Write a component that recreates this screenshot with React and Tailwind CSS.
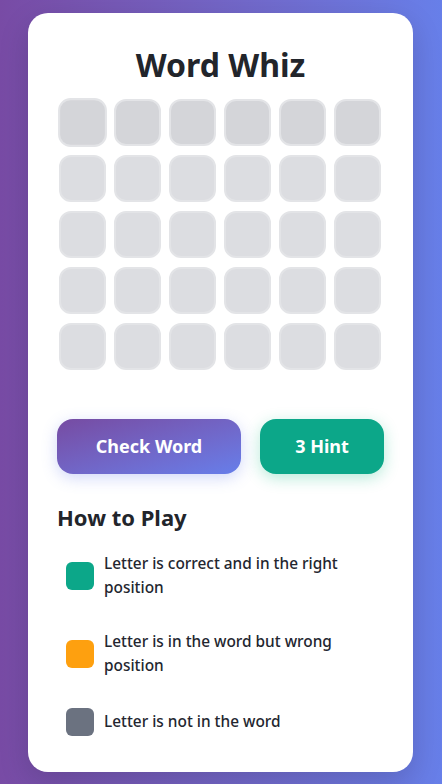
import React from "react";

const FONT = { fontFamily: '"Noto Sans", "Open Sans", sans-serif' };

function Tile({ first, active }) {
  return (
    <div
      className={
        "w-[47px] h-[47px] rounded-[12px] border-2 border-[#e3e4e7] " +
        (first ? "bg-[#d4d5d9] " : "bg-[#dcdde1] ") +
        (active ? "scale-[1.04]" : "")
      }
    />
  );
}

function Legend({ color, text }) {
  return (
    <div className="flex items-center gap-[10px] pl-[9px] pr-[9px]">
      <div className={"w-[28px] h-[28px] rounded-[6px] shrink-0 " + color} />
      <div className="text-[15.4px] leading-[24px] font-medium text-[#23262f]">{text}</div>
    </div>
  );
}

export default function App() {
  const rows = [0, 1, 2, 3, 4];
  const cols = [0, 1, 2, 3, 4, 5];
  return (
    <div
      className="min-h-[784px] w-full bg-gradient-to-r from-[#784ba5] to-[#677fe9] pl-[28px] pr-[29px] pt-[13px] pb-[13px]"
      style={FONT}
    >
      <div className="bg-white rounded-[20px] px-[29px] pt-[30px] pb-[36px] shadow-[0_10px_30px_rgba(0,0,0,0.15)]">
        <h1 className="text-center text-[32px] leading-[44px] font-bold text-[#22252b]">Word Whiz</h1>
        <div className="mt-[12px] ml-[2px] w-[322px] grid grid-cols-6 gap-x-[8px] gap-y-[9px]">
          {rows.map((r) =>
            cols.map((c) => <Tile key={r + "-" + c} first={r === 0} active={r === 0 && c === 0} />)
          )}
        </div>
        <div className="mt-[49px] flex justify-between">
          <button className="w-[184px] h-[55px] rounded-[16px] bg-gradient-to-br from-[#764ba2] to-[#667eea] text-white text-[18px] font-bold shadow-[0_4px_15px_rgba(102,126,234,0.3)]">
            Check Word
          </button>
          <button className="w-[124px] h-[55px] rounded-[16px] bg-[#0ca789] text-white text-[18px] font-bold shadow-[0_4px_15px_rgba(16,185,129,0.3)]">
            3 Hint
          </button>
        </div>
        <h2 className="mt-[28px] text-[22px] leading-[30px] font-bold text-[#22252b]">How to Play</h2>
        <div className="mt-[20px] flex flex-col gap-[30px]">
          <Legend color="bg-[#0ca789]" text="Letter is correct and in the right position" />
          <Legend color="bg-[#fea00f]" text="Letter is in the word but wrong position" />
          <Legend color="bg-[#6b7280]" text="Letter is not in the word" />
        </div>
      </div>
    </div>
  );
}
